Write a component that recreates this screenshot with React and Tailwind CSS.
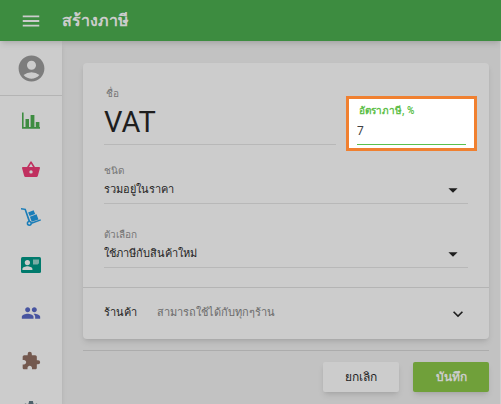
import { useState } from 'react';
import { MdMenu, MdAccountCircle, MdGroup, MdExtension, MdSettings, MdArrowDropDown, MdExpandMore } from 'react-icons/md';

function ChartIcon() {
  return (
    <svg viewBox="0 0 18 17" className="w-[18px] h-[17px]" fill="currentColor">
      <path d="M0 0.5h1.6V15H18v1.8H0z" />
      <path d="M3.5 7h3.5v8.5H3.5zM8.6 3h3.8v12.5H8.6zM13.8 10h3.6v5.5h-3.6z" />
    </svg>
  );
}

function BasketIcon() {
  return (
    <svg viewBox="0 0 18 16" className="w-[18px] h-4">
      <path d="M5.4 7L9 1.2 12.6 7" fill="none" stroke="currentColor" strokeWidth="1.6" strokeLinejoin="round" />
      <path fill="currentColor" fillRule="evenodd" d="M.8 6h16.4c.6 0 .9.5.8 1l-2.2 8c-.2.6-.7 1-1.3 1h-11c-.6 0-1.1-.4-1.3-1L0 7c-.1-.5.2-1 .8-1zM9 9.2a1.7 1.7 0 1 0 0 3.4 1.7 1.7 0 0 0 0-3.4z" />
    </svg>
  );
}

function DollyIcon() {
  return (
    <svg viewBox="0 0 20 18" className="w-5 h-[18px]" fill="currentColor">
      <path d="M0 0l4.8.7 4.4 12.2-1.7.6L3.6 2 0 1.5z" />
      <path d="M7.1 4.4l5.5-2.2 1.6 3.8-5.6 2.1z" />
      <path d="M8.9 8.8l6.6-2.6 2 5.2-6.8 2.3z" />
      <path d="M10 14.4l9.5-3.2.5 1.4-9.4 3.4z" />
      <circle cx="8.3" cy="15.3" r="1.9" fill="none" stroke="currentColor" strokeWidth="1.5" />
    </svg>
  );
}

function CardIcon() {
  return (
    <svg viewBox="0 0 20 16" className="w-5 h-4">
      <rect width="20" height="16" rx="1.5" fill="currentColor" />
      <g fill="#cccccc">
        <circle cx="6.4" cy="5.6" r="2.6" />
        <path d="M1.4 13v-1c0-1.8 3.2-2.7 5-2.7s5 .9 5 2.7v1z" />
      </g>
      <path d="M12 2.4h6v3.8l-1.4 1.4H12z" fill="#cccccc" opacity=".6" />
    </svg>
  );
}

const menu = [
  { label: 'รายงาน', color: 'text-[#3d8c40]', icon: <ChartIcon /> },
  { label: 'สินค้า', color: 'text-[#c0305f]', icon: <BasketIcon /> },
  { label: 'คลังสินค้า', color: 'text-[#1a7db8]', icon: <DollyIcon /> },
  { label: 'พนักงาน', color: 'text-[#007a6c]', icon: <CardIcon /> },
  { label: 'ลูกค้า', color: 'text-[#4754a0]', icon: <MdGroup size={20} /> },
  { label: 'แอป', color: 'text-[#74594f]', icon: <MdExtension size={20} /> },
  { label: 'การตั้งค่า', color: 'text-[#4d616b]', icon: <MdSettings size={20} /> },
];

function SelectField({ id, label, options }) {
  return (
    <div className="relative flex flex-col">
      <label htmlFor={id} className="h-[14px] text-[10px] leading-[14px] text-[#757575]">{label}</label>
      <select id={id} className="h-[26px] w-full appearance-none border-b border-[#b8b8b8] text-[11px] text-[#1e1e1e] outline-none">
        {options.map(o => <option key={o}>{o}</option>)}
      </select>
      <MdArrowDropDown size={22} className="absolute right-1 bottom-[3px] text-[#1e1e1e] pointer-events-none" />
    </div>
  );
}

export default function App() {
  const [name, setName] = useState('VAT');
  const [rate, setRate] = useState('7');

  return (
    <div className="flex flex-col h-screen overflow-hidden bg-[#c2c2c2] font-[Roboto,'Noto_Sans',sans-serif]">
      <header className="relative z-10 flex items-center shrink-0 h-[41px] pl-5 gap-5 bg-[#3d8c40] text-[#cccccc] shadow-md">
        <button aria-label="เมนู"><MdMenu size={22} /></button>
        <h1 className="text-[16px] font-bold">สร้างภาษี</h1>
      </header>

      <div className="flex flex-1 min-h-0 border-r border-[#d0d0d0]">
        <nav className="flex flex-col shrink-0 w-[62px] bg-[#cccccc] shadow-md">
          <button aria-label="บัญชี" className="flex items-center justify-center shrink-0 h-[55px] border-b border-[#b4b4b4] text-[#7d7d7d]">
            <MdAccountCircle size={31} />
          </button>
          {menu.map(m => (
            <a key={m.label} href="#" aria-label={m.label} className={`flex items-center justify-center shrink-0 h-12 pt-px ${m.color}`}>
              {m.icon}
            </a>
          ))}
        </nav>

        <main className="flex-1 min-w-0 pl-[21px] pr-[11px] pt-[22px]">
          <form onSubmit={e => e.preventDefault()}>
            <section className="rounded-sm bg-[#cccccc] shadow-md">
              <div className="flex items-start gap-[10px] pl-[21px] pr-3 pt-6">
                <div className="flex flex-col flex-1 min-w-0">
                  <label htmlFor="name" className="h-[14px] pl-0.5 text-[10px] leading-[14px] text-[#757575]">ชื่อ</label>
                  <input id="name" value={name} onChange={e => setName(e.target.value)}
                    className="h-11 w-full pb-0.5 border-b border-[#b8b8b8] text-[29px] text-[#1e1e1e] outline-none" />
                </div>
                <div className="flex flex-col w-[131px] h-[55px] mt-[9px] px-2 pt-[5px] border-3 border-[#f08030] bg-white">
                  <label htmlFor="rate" className="h-[14px] pl-0.5 text-[10px] leading-[14px] font-bold text-[#5fbf4c]">อัตราภาษี, %</label>
                  <input id="rate" value={rate} onChange={e => setRate(e.target.value)}
                    className="h-[27px] w-full border-b border-b-[#5cc04c] text-[12px] text-[#424242] outline-none" />
                </div>
              </div>

              <div className="flex flex-col gap-6 px-[21px] pt-[13px] pb-[19px]">
                <SelectField id="type" label="ชนิด" options={['รวมอยู่ในราคา', 'เพิ่มจากราคา']} />
                <SelectField id="option" label="ตัวเลือก" options={['ใช้ภาษีกับสินค้าใหม่', 'ใช้ภาษีกับสินค้าทั้งหมด']} />
              </div>

              <button type="button" className="flex items-center w-full h-[52px] px-[21px] border-t border-[#b4b4b4] text-[11px]">
                <span className="text-[#1e1e1e]">ร้านค้า</span>
                <span className="ml-5 text-[#6b6b6b]">สามารถใช้ได้กับทุกๆร้าน</span>
                <MdExpandMore size={20} className="ml-auto text-[#1e1e1e]" />
              </button>
            </section>

            <div className="flex justify-end gap-[14px] mt-[11px] pt-[11px] border-t border-[#acacac] text-[12px]">
              <button type="button" className="w-[76px] h-[30px] rounded-xs bg-[#cccccc] text-[#1e1e1e] shadow-md">ยกเลิก</button>
              <button type="submit" className="w-[76px] h-[30px] rounded-xs bg-[#70a03a] text-[#cccccc] font-bold shadow-md">บันทึก</button>
            </div>
          </form>
        </main>
      </div>
    </div>
  );
}
